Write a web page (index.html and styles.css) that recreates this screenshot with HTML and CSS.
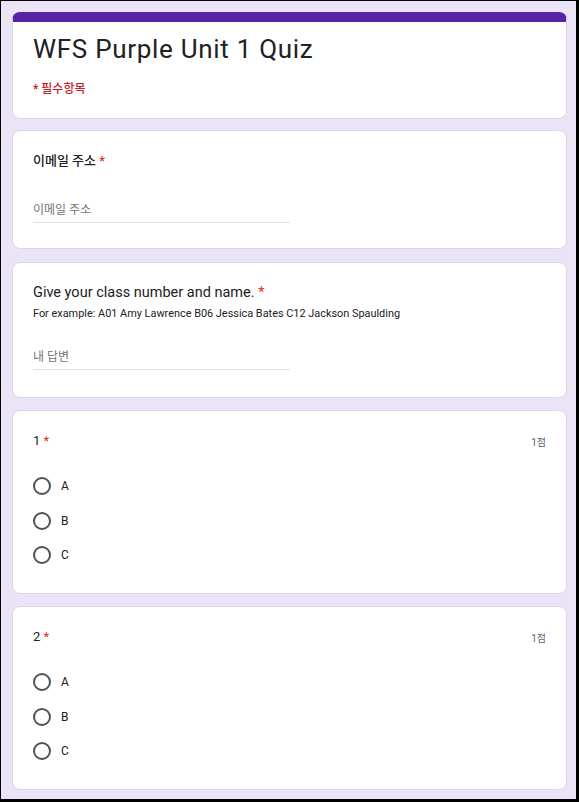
FILE: index.html
```html
<!DOCTYPE html>
<html lang="ko">
<head>
<meta charset="utf-8">
<title>WFS Purple Unit 1 Quiz</title>
<link rel="stylesheet" href="styles.css">
</head>
<body>
<div class="page">
  <section class="card card-head">
    <h1 class="form-title">WFS Purple Unit 1 Quiz</h1>
    <div class="required-note">* 필수항목</div>
  </section>

  <section class="card card-text card-email">
    <div class="q-title">이메일 주소 <span class="star">*</span></div>
    <div class="field"><span class="placeholder">이메일 주소</span></div>
  </section>

  <section class="card card-text card-name">
    <div class="q-title q-title-en">Give your class number and name. <span class="star">*</span></div>
    <div class="q-help">For example: A01 Amy Lawrence B06 Jessica Bates C12 Jackson Spaulding</div>
    <div class="field"><span class="placeholder">내 답변</span></div>
  </section>

  <section class="card card-choice">
    <div class="q-row">
      <div class="q-title q-num">1 <span class="star">*</span></div>
      <div class="points">1점</div>
    </div>
    <div class="options">
      <div class="option"><span class="radio"></span><span class="opt-label">A</span></div>
      <div class="option"><span class="radio"></span><span class="opt-label">B</span></div>
      <div class="option"><span class="radio"></span><span class="opt-label">C</span></div>
    </div>
  </section>

  <section class="card card-choice">
    <div class="q-row">
      <div class="q-title q-num">2 <span class="star">*</span></div>
      <div class="points">1점</div>
    </div>
    <div class="options">
      <div class="option"><span class="radio"></span><span class="opt-label">A</span></div>
      <div class="option"><span class="radio"></span><span class="opt-label">B</span></div>
      <div class="option"><span class="radio"></span><span class="opt-label">C</span></div>
    </div>
  </section>
</div>
</body>
</html>
```

FILE: styles.css
```css
* { box-sizing: border-box; }

html, body {
  margin: 0;
  padding: 0;
  background: #000;
}

body {
  font-family: Roboto, "Noto Sans CJK KR", sans-serif;
  color: #202124;
}

.page {
  width: 579px;
  height: 802px;
  overflow: hidden;
  border-style: solid;
  border-color: #000;
  border-width: 1px 3px 3px 1px;
  background: #ebe4f6;
  padding: 11px 9px 0 11px;
  display: flex;
  flex-direction: column;
  gap: 12px;
}

.card {
  flex: none;
  background: #fff;
  border: 1px solid #dad6e2;
  border-radius: 8px;
  padding: 20px 20px 0 20px;
}

.card-head {
  height: 107px;
  border-top: 10px solid #5523a6;
  padding-top: 10px;
}

.form-title {
  margin: 0;
  font-family: Roboto, sans-serif;
  font-weight: 400;
  font-size: 26px;
  line-height: 34px;
  color: #202124;
  letter-spacing: 0.7px;
}

.required-note {
  margin-top: 15px;
  font-family: Roboto, "Noto Sans CJK KR", sans-serif;
  font-size: 12px;
  line-height: 16px;
  font-weight: 500;
  color: #c5221f;
}

.card-email { height: 119px; margin-top: -1px; }
.card-name { height: 136px; margin-top: 1px; }
.card-choice { height: 184px; }

.q-title {
  font-family: Roboto, "Noto Sans CJK KR", sans-serif;
  font-size: 13px;
  line-height: 20px;
  color: #202124;
  font-weight: 500;
}

.q-title-en {
  font-size: 14.5px;
  line-height: 22px;
  font-weight: 400;
}

.card-name { padding-top: 19px; }

.star { color: #d93025; }

.q-help {
  margin-top: 2px;
  font-size: 10.9px;
  line-height: 16px;
  color: #202124;
}

.field {
  width: 257px;
  border-bottom: 1px solid #e0e0e0;
  padding-bottom: 2px;
  margin-top: 29px;
}

.card-name .field { margin-top: 25px; }

.placeholder {
  display: block;
  font-family: Roboto, "Noto Sans CJK KR", sans-serif;
  font-size: 12px;
  line-height: 20px;
  color: #70757a;
}

.q-row {
  display: flex;
  justify-content: space-between;
  align-items: center;
}

.q-num { font-weight: 400; }

.points {
  font-family: Roboto, "Noto Sans CJK KR", sans-serif;
  font-size: 10px;
  color: #5f6368;
}

.options {
  margin-top: 18px;
  display: flex;
  flex-direction: column;
}

.option {
  height: 34.5px;
  display: flex;
  align-items: center;
  gap: 10px;
}

.radio {
  width: 18px;
  height: 18px;
  border: 2px solid #4f5256;
  border-radius: 50%;
  flex: none;
}

.opt-label {
  font-size: 12px;
  color: #202124;
}
```
